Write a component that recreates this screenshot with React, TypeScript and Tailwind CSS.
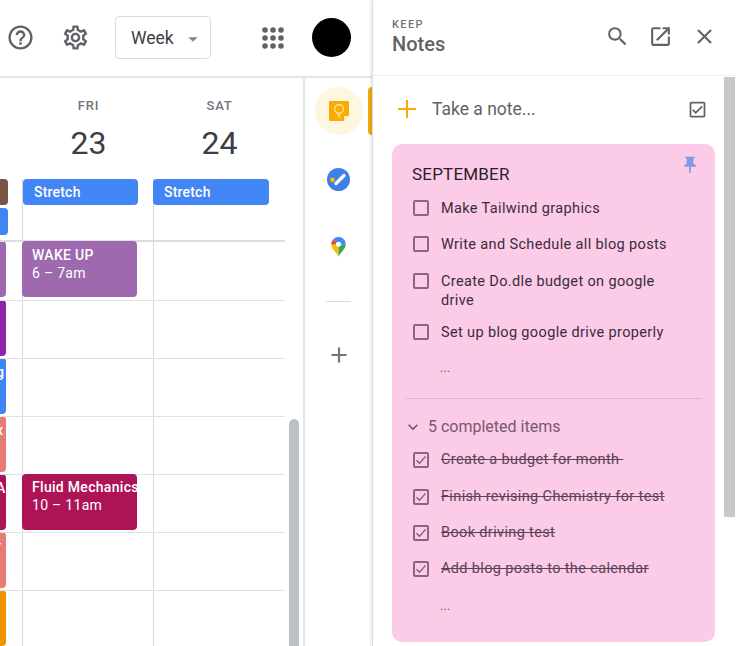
import {
  MdAdd,
  MdArrowDropDown,
  MdClose,
  MdExpandMore,
  MdHelpOutline,
  MdOpenInNew,
  MdOutlineCheckBox,
  MdOutlineSettings,
  MdPushPin,
  MdSearch,
} from "react-icons/md";

interface HourEvent {
  color: string;
  glyph?: string;
}

const hourRows: HourEvent[] = [
  { color: "bg-[#9e69af]" },
  { color: "bg-[#8e24aa]" },
  { color: "bg-[#3f86f5]", glyph: "g" },
  { color: "bg-[#e67c73]", glyph: "x" },
  { color: "bg-[#ad1457]", glyph: "A" },
  { color: "bg-[#e67c73]", glyph: "r" },
  { color: "bg-[#f09300]" },
];

const openItems = [
  ["Make Tailwind graphics"],
  ["Write and Schedule all blog posts"],
  ["Create Do.dle budget on google", "drive"],
  ["Set up blog google drive properly"],
];

const doneItems = [
  "Create a budget for month ",
  "Finish revising Chemistry for test",
  "Book driving test",
  "Add blog posts to the calendar",
];

const NineDots = () => (
  <svg width="22" height="22" viewBox="0 0 22 22" fill="#5f6368">
    {[3, 11, 19].map((y) =>
      [3, 11, 19].map((x) => <circle key={`${x}-${y}`} cx={x} cy={y} r="2.8" />)
    )}
  </svg>
);

const KeepIcon = () => (
  <svg width="20" height="20" viewBox="0 0 20 20">
    <path d="M1 0h18a1 1 0 0 1 1 1v13.5L14.5 20H1a1 1 0 0 1-1-1V1a1 1 0 0 1 1-1z" fill="#f9ab00" />
    <path d="M20 15h-5v5z" fill="#fdeab5" />
    <circle cx="10" cy="8" r="4.4" fill="none" stroke="#feefc3" strokeWidth="1.1" />
    <path d="M8.2 14h3.6M8.8 16h2.4" stroke="#feefc3" strokeWidth="1.1" />
  </svg>
);

const TasksIcon = () => (
  <svg width="23" height="23" viewBox="0 0 23 23">
    <circle cx="11.5" cy="11.5" r="11.5" fill="#3f7fe8" />
    <path d="M9 15.5l8-8" stroke="#fff" strokeWidth="3.2" strokeLinecap="round" />
    <circle cx="5.4" cy="11.8" r="2.4" fill="#fbbc04" />
  </svg>
);

const MapsIcon = () => (
  <svg width="15" height="20" viewBox="0 0 16 21">
    <path d="M8 21C6.5 16.5 0.2 13 0.2 7.6L8 8z" fill="#fbbc04" />
    <path d="M8 21c1.5-4.5 7.8-8 7.8-13.4L8 8z" fill="#34a853" />
    <path d="M2.2 2.4A7.8 7.8 0 0 0 0.2 7.6L8 8z" fill="#ea4335" />
    <path d="M2.2 2.4A7.8 7.8 0 0 1 13.5 2L8 8z" fill="#4285f4" />
    <path d="M13.5 2a7.8 7.8 0 0 1 2.3 5.6L8 8z" fill="#4285f4" />
    <circle cx="8" cy="7.6" r="2.7" fill="#fff" />
  </svg>
);

const CheckBox = ({ checked }: { checked?: boolean }) => (
  <div className="flex h-4 w-4 shrink-0 items-center justify-center rounded-[2px] border-2 border-[#8b6580]">
    {checked && (
      <svg width="12" height="12" viewBox="0 0 12 12" fill="none" stroke="#7a5770" strokeWidth="1.3">
        <path d="M1.5 6.3l3 3 6-7" />
      </svg>
    )}
  </div>
);

const TopBar = () => (
  <div className="flex h-[78px] shrink-0 items-center border-b-2 border-[#e4e5e7] bg-white pb-[1px] text-[#5f6368]">
    <MdHelpOutline className="ml-[6px] text-[29px]" />
    <MdOutlineSettings className="ml-[26px] text-[29px]" />
    <div className="ml-[25px] flex h-[43px] w-[96px] items-center rounded-[4px] border border-[#dadce0] pl-[15px] pt-[2px] text-[17.5px] text-[#3c4043]">
      Week
      <MdArrowDropDown className="ml-[8px] text-[22px] text-[#80868b]" />
    </div>
    <div className="ml-[51px]">
      <NineDots />
    </div>
    <div className="ml-[28px] h-[39px] w-[39px] rounded-full bg-black" />
  </div>
);

const CalendarGrid = () => (
  <div className="relative flex w-[305px] shrink-0 flex-col border-r-2 border-[#e4e5e7] bg-white pr-[18px]">
    <div className="flex h-[101px] shrink-0">
      <div className="w-[23px]" />
      {[
        ["FRI", "23"],
        ["SAT", "24"],
      ].map(([day, num]) => (
        <div key={day} className="flex w-[131px] flex-col items-center pt-[20px]">
          <span className="text-[13px] font-medium leading-[16px] tracking-[0.8px] text-[#70757a]">{day}</span>
          <span className="mt-[10px] text-[32px] leading-[38px] text-[#3c4043]">{num}</span>
        </div>
      ))}
    </div>

    <div className="flex h-[63px] shrink-0 border-b-2 border-[#dcdee1]">
      <div className="flex w-[22px] flex-col gap-[3px]">
        <div className="h-[26px] w-[8px] rounded-r-[4px] bg-[#795548]" />
        <div className="h-[27px] w-[8px] rounded-r-[4px] bg-[#3f86f5]" />
      </div>
      <div className="w-[131px] border-l border-[#d5d7da] pr-[15px]">
        <div className="h-[26px] rounded-[4px] bg-[#4285f4] pl-[11px] text-[14px] font-medium leading-[27px] tracking-[0.2px] text-white">
          Stretch
        </div>
      </div>
      <div className="w-[132px] border-l border-[#d5d7da] pr-[16px]">
        <div className="-ml-px h-[26px] rounded-[4px] bg-[#4285f4] pl-[11px] text-[14px] font-medium leading-[27px] tracking-[0.2px] text-white">
          Stretch
        </div>
      </div>
    </div>

    {hourRows.map((row, i) => (
      <div key={i} className={i === 0 ? "flex h-[58px] shrink-0" : "flex h-[58px] shrink-0 border-t border-[#dfe1e4]"}>
        <div className="w-[22px] overflow-hidden">
          <div className={`-mt-px h-[56px] w-[6px] overflow-hidden rounded-r-[4px] ${row.color}`}>
            {row.glyph && (
              <span className="-ml-[4px] block pt-[5px] text-[14px] font-medium leading-[18px] text-white">{row.glyph}</span>
            )}
          </div>
        </div>
        <div className="relative w-[131px] border-l border-[#d5d7da]">
          {i === 0 && (
            <div className="absolute -left-px -top-px h-[56px] w-[115px] overflow-hidden whitespace-nowrap rounded-[4px] bg-[#9e69af] pl-[10px] pt-[5px] text-[14px] leading-[18px] tracking-[0.3px] text-white">
              <div className="font-medium">WAKE UP</div>
              <div>6 – 7am</div>
            </div>
          )}
          {i === 4 && (
            <div className="absolute -left-px -top-px h-[56px] w-[115px] overflow-hidden whitespace-nowrap rounded-[4px] bg-[#ad1457] pl-[10px] pt-[4px] text-[14px] leading-[18px] tracking-[0.3px] text-white">
              <div className="font-medium">Fluid Mechanics</div>
              <div>10 – 11am</div>
            </div>
          )}
        </div>
        <div className="w-[132px] border-l border-[#d5d7da]" />
      </div>
    ))}

    <div className="absolute right-[4px] top-[341px] h-[300px] w-[10px] rounded-t-[5px] bg-[#bcc1c6]" />
  </div>
);

const SideRail = () => (
  <div className="relative flex w-[67px] shrink-0 flex-col items-center bg-white pt-[9px]">
    <div className="flex h-12 w-12 items-center justify-center rounded-full bg-[#fef7e0]">
      <KeepIcon />
    </div>
    <div className="absolute right-0 top-[9px] h-12 w-1 rounded-l-[4px] bg-[#f0ac11]" />
    <div className="mt-[20px] flex h-12 items-center">
      <TasksIcon />
    </div>
    <div className="mt-[20px] flex h-12 items-center">
      <MapsIcon />
    </div>
    <div className="mt-[30px] h-px w-[25px] bg-[#dadce0]" />
    <MdAdd className="mt-[40px] text-[26px] text-[#70757a]" />
  </div>
);

const NotesPanel = () => (
  <div className="z-10 flex h-full w-[364px] shrink-0 flex-col border-l border-[#dcdcdc] bg-white shadow-[-1px_0_3px_rgba(0,0,0,0.12)]">
    <div className="flex h-[76px] shrink-0 items-center border-b border-[#f1f1f1] pl-[19px]">
      <div className="w-[213px]">
        <div className="text-[11px] font-medium leading-[13px] tracking-[1.4px] text-[#70757a]">KEEP</div>
        <div className="text-[20px] font-medium leading-[26px] text-[#5f6368]">Notes</div>
      </div>
      <MdSearch className="-mt-[2px] text-[25px] text-[#5f6368]" />
      <MdOpenInNew className="-mt-[2px] ml-[18px] text-[25px] text-[#5f6368]" />
      <MdClose className="-mt-[2px] ml-[19px] text-[25px] text-[#5f6368]" />
    </div>

    <div className="flex min-h-0 flex-1">
      <div className="w-[351px] shrink-0">
        <div className="flex h-[68px] items-center pb-[2px] pl-[25px]">
          <svg width="18" height="18" viewBox="0 0 18 18" stroke="#f9ab00" strokeWidth="2">
            <path d="M9 0v18M0 9h18" />
          </svg>
          <span className="ml-[16px] w-[255px] text-[17.5px] text-[#5f6368]">Take a note...</span>
          <MdOutlineCheckBox className="text-[21px] text-[#5f6368]" />
        </div>

        <div className="ml-[19px] h-[498px] w-[323px] rounded-[10px] bg-[#fbcbe7] px-[13px] pt-[19px] text-[#3a2b3d]">
          <div className="relative pl-[7px] text-[17px] leading-[22px] tracking-[0.2px] text-[#2b1f2d]">
            SEPTEMBER
            <MdPushPin className="absolute -top-[8px] right-[2px] text-[20px] text-[#7f9ae8]" />
          </div>

          <div className="mt-[14px] pl-[8px] text-[14.5px] leading-[18px] tracking-[0.36px]">
            {openItems.map((lines) => (
              <div key={lines[0]} className={lines.length > 1 ? "flex h-[51px] gap-[12px]" : "flex h-[36.4px] gap-[12px]"}>
                <div className="pt-[1px]">
                  <CheckBox />
                </div>
                <div className="leading-[19px]">
                  {lines.map((line) => (
                    <div key={line}>{line}</div>
                  ))}
                </div>
              </div>
            ))}
            <div className="pl-[27px] text-[12px] leading-[18px] text-[#7a5770]">...</div>
          </div>

          <div className="mt-[21px] h-px bg-[#e6b4d2]" />

          <div className="mt-[18px] flex items-center text-[16px] leading-[20px] text-[#7a5770]">
            <MdExpandMore className="-ml-[2px] text-[20px]" />
            <span className="ml-[5px]">5 completed items</span>
          </div>

          <div className="mt-[14px] pl-[8px] text-[14.5px] leading-[18px] tracking-[0.36px] text-[#5d4257]">
            {doneItems.map((item) => (
              <div key={item} className="flex h-[36.4px] gap-[12px]">
                <div className="pt-[1px]">
                  <CheckBox checked />
                </div>
                <span className="whitespace-pre line-through">{item}</span>
              </div>
            ))}
            <div className="pl-[27px] text-[12px] leading-[18px] text-[#7a5770]">...</div>
          </div>
        </div>
      </div>
      <div className="mt-[1px] h-[440px] w-[11px] bg-[#c8c8c8]" />
    </div>
  </div>
);

export default function App() {
  return (
    <div className="flex h-[646px] w-[736px] overflow-hidden bg-white font-['Roboto',sans-serif]">
      <div className="flex w-[372px] shrink-0 flex-col">
        <TopBar />
        <div className="flex min-h-0 flex-1">
          <CalendarGrid />
          <SideRail />
        </div>
      </div>
      <NotesPanel />
    </div>
  );
}
